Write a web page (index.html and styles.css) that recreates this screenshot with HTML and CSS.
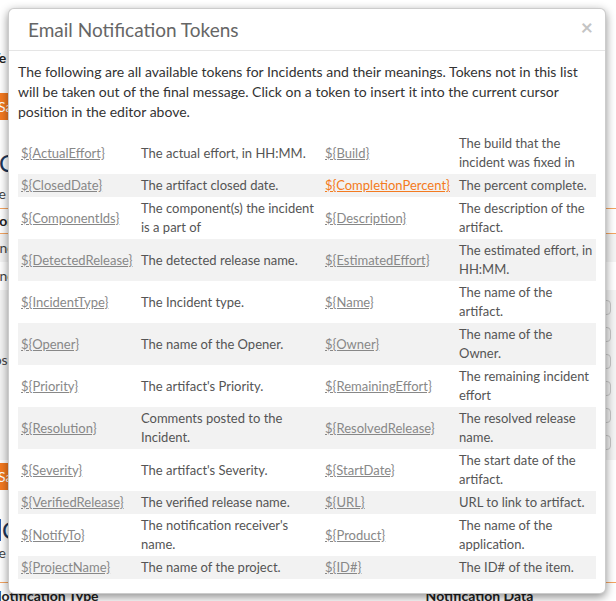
FILE: index.html
```html
<!DOCTYPE html>
<html>
<head>
<meta charset="utf-8">
<link rel="stylesheet" href="styles.css">
</head>
<body>
<div class="page">
  <div class="top-label">Te</div>
  <div class="btn-row"><span class="btn">Sa</span></div>
  <h2 class="sec">C</h2>
  <div class="note">Se</div>
  <div class="grid-head"><span>For</span></div>
  <div class="grid-body">
    <div class="grid-row">None</div>
    <div class="grid-row">None</div>
    <div class="grid-row">&nbsp;</div>
    <div class="grid-row">&nbsp;</div>
    <div class="grid-row">Close</div>
    <div class="grid-row">&nbsp;</div>
    <div class="grid-row">&nbsp;</div>
    <div class="grid-row">&nbsp;</div>
    <div class="toggles"><i></i><i></i><i></i><i></i><i></i><i></i></div>
  </div>
  <div class="btn-row2"><span class="btn">Sa</span></div>
  <h2 class="sec2"><span class="bar"></span>C</h2>
  <div class="note2">Se</div>
  <div class="foot-head"><span>Notification Type</span><span class="nd">Notification Data</span></div>
</div>

<div class="modal">
  <div class="modal-header">
    <h4 class="modal-title">Email Notification Tokens</h4>
    <span class="close">×</span>
  </div>
  <div class="modal-body">
    <p class="intro">The following are all available tokens for Incidents and their meanings. Tokens not in this list will be taken out of the final message. Click on a token to insert it into the current cursor position in the editor above.</p>
    <table class="tokens">
      <colgroup><col class="c1"><col class="c2"><col class="c3"><col class="c4"></colgroup>
      <tr><td><a>${ActualEffort}</a></td><td>The actual effort, in HH:MM.</td><td><a>${Build}</a></td><td>The build that the incident was fixed in</td></tr>
      <tr><td><a>${ClosedDate}</a></td><td>The artifact closed date.</td><td><a class="hot">${CompletionPercent}</a></td><td>The percent complete.</td></tr>
      <tr><td><a>${ComponentIds}</a></td><td>The component(s) the incident is a part of</td><td><a>${Description}</a></td><td>The description of the artifact.</td></tr>
      <tr><td><a>${DetectedRelease}</a></td><td>The detected release name.</td><td><a>${EstimatedEffort}</a></td><td>The estimated effort, in HH:MM.</td></tr>
      <tr><td><a>${IncidentType}</a></td><td>The Incident type.</td><td><a>${Name}</a></td><td>The name of the artifact.</td></tr>
      <tr><td><a>${Opener}</a></td><td>The name of the Opener.</td><td><a>${Owner}</a></td><td>The name of the Owner.</td></tr>
      <tr><td><a>${Priority}</a></td><td>The artifact's Priority.</td><td><a>${RemainingEffort}</a></td><td>The remaining incident effort</td></tr>
      <tr><td><a>${Resolution}</a></td><td>Comments posted to the Incident.</td><td><a>${ResolvedRelease}</a></td><td>The resolved release name.</td></tr>
      <tr><td><a>${Severity}</a></td><td>The artifact's Severity.</td><td><a>${StartDate}</a></td><td>The start date of the artifact.</td></tr>
      <tr><td><a>${VerifiedRelease}</a></td><td>The verified release name.</td><td><a>${URL}</a></td><td>URL to link to artifact.</td></tr>
      <tr><td><a>${NotifyTo}</a></td><td>The notification receiver's name.</td><td><a>${Product}</a></td><td>The name of the application.</td></tr>
      <tr><td><a>${ProjectName}</a></td><td>The name of the project.</td><td><a>${ID#}</a></td><td>The ID# of the item.</td></tr>
    </table>
  </div>
</div>
</body>
</html>
```
FILE: styles.css
```css
html, body {
  margin: 0;
  padding: 0;
  background: #fff;
  overflow: hidden;
}
body {
  font-family: Lato, "Open Sans", sans-serif;
  color: #333;
  font-size: 14px;
  width: 616px;
  height: 601px;
  position: relative;
}
.page {
  margin-left: -9px;
  width: 640px;
  display: flex;
  flex-direction: column;
}
.top-label {
  margin-top: 50px;
  height: 16px;
  line-height: 16px;
  font-weight: bold;
  color: #222;
  padding-left: 1px;
}
.btn-row { margin-top: 27px; }
.btn {
  display: inline-block;
  background: #f47a20;
  color: #fff;
  height: 27px;
  line-height: 27px;
  padding: 0 10px 0 7px;
}
.sec {
  margin: 30px 0 0 0;
  font-size: 24px;
  font-weight: normal;
  color: #1d3557;
  line-height: 26px;
  height: 26px;
  padding-left: 8px;
}
.note {
  margin-top: 9px;
  height: 18px;
  line-height: 18px;
  color: #444;
}
.grid-head {
  margin-top: 5px;
  border-top: 1px solid #f4a460;
  border-bottom: 1px solid #f4a460;
  height: 24px;
  line-height: 24px;
  font-weight: bold;
  color: #222;
  padding-left: 1px;
}
.grid-body {
  position: relative;
  background: #f4f4f4;
  height: 226px;
}
.grid-row {
  height: 28px;
  line-height: 28px;
  color: #444;
  text-indent: -10px;
}
.grid-row:nth-child(2) { background: #fff; }
.toggles {
  position: absolute;
  right: 20px;
  top: 66px;
  display: flex;
  flex-direction: column;
  gap: 12px;
}
.toggles i {
  display: block;
  width: 12px;
  height: 13px;
  border: 1px solid #c8c8c8;
  border-radius: 4px;
  background: #f0f0f0;
}
.btn-row2 { margin-top: 3px; }
.sec2 {
  margin: 26px 0 0 0;
  font-size: 24px;
  font-weight: normal;
  color: #1d3557;
  line-height: 28px;
  height: 28px;
  display: flex;
  align-items: center;
  padding-left: 7px;
}
.bar {
  display: inline-block;
  width: 3px;
  height: 22px;
  background: #2a5db0;
  margin-right: 1px;
}
.note2 {
  height: 18px;
  line-height: 18px;
  color: #444;
}
.foot-head {
  margin-top: 20px;
  border-top: 1px solid #f4a460;
  display: flex;
  font-weight: bold;
  color: #222;
  padding-top: 5px;
  line-height: 16px;
}
.foot-head .nd { margin-left: 327px; }

/* Modal */
.modal {
  position: absolute;
  left: 8px;
  top: 8px;
  width: 596px;
  background: #fff;
  border: 1px solid rgba(0,0,0,0.2);
  border-radius: 6px;
  box-shadow: 0 3px 10px rgba(0,0,0,0.45);
}
.modal-header {
  position: relative;
  border-bottom: 1px solid #e5e5e5;
  padding: 10px 19px 10px 19px;
  height: 21px;
}
.modal-title {
  margin: 0;
  font-size: 19px;
  font-weight: normal;
  color: #666;
  line-height: 22px;
}
.close {
  position: absolute;
  right: 12px;
  top: 6px;
  font-size: 21px;
  font-weight: bold;
  color: #c4c4c4;
  line-height: 24px;
}
.modal-body {
  padding: 11px 9px 14px 9px;
}
.intro {
  margin: 0 0 10px 0;
  font-size: 14px;
  line-height: 20px;
  color: #333;
}
.tokens {
  width: 578px;
  table-layout: fixed;
  border-collapse: collapse;
  font-size: 13px;
  line-height: 19px;
}
.c1 { width: 119px; }
.c2 { width: 185px; }
.c3 { width: 133px; }
.c4 { width: 141px; }
.tokens td {
  padding: 2px 2px 2px 3px;
  vertical-align: middle;
  color: #555;
}
.tokens td:nth-child(2), .tokens td:nth-child(4) { padding-left: 4px; padding-right: 0; }
.tokens tr:nth-child(even) td { background: #f2f2f2; }
.tokens a {
  color: #888;
  text-decoration: underline;
}
.tokens a.hot { color: #f47a20; }
```
